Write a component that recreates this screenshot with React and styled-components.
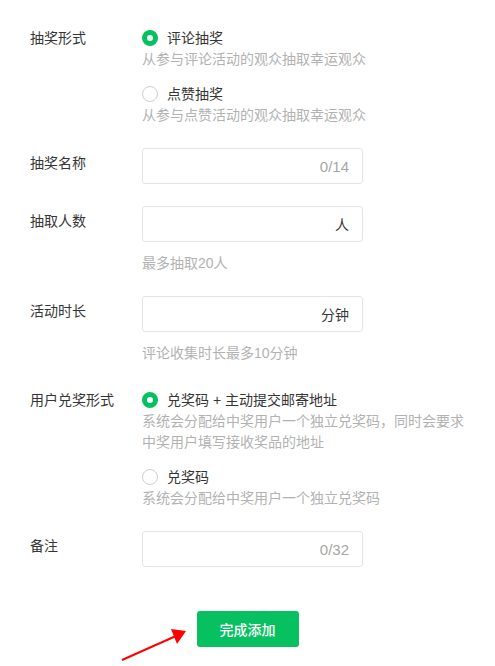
import React from 'react';
import styled, { createGlobalStyle } from 'styled-components';

const GlobalStyle = createGlobalStyle`
  html, body {
    margin: 0;
    padding: 0;
    background: #ffffff;
  }
  body {
    font-family: "Liberation Sans", "Noto Sans CJK SC", sans-serif;
    font-size: 14px;
    color: #353535;
  }
`;

const Page = styled.div`
  position: relative;
  width: 495px;
  min-height: 666px;
  box-sizing: border-box;
  padding: 27px 0 0 30px;
`;

const Form = styled.div`
  display: flex;
  flex-direction: column;
  gap: 22px;
`;

const Row = styled.div`
  display: grid;
  grid-template-columns: 112px 328px;
  align-items: start;
  margin-top: ${({ $push }) => ($push ? `${$push}px` : '0')};
`;

const Label = styled.div`
  line-height: 22px;
  margin-top: ${({ $input }) => ($input ? '4px' : '0')};
  color: #353535;
  white-space: nowrap;
`;

const Field = styled.div`
  display: flex;
  flex-direction: column;
`;

const Options = styled.div`
  display: flex;
  flex-direction: column;
  gap: 13px;
`;

const Option = styled.div`
  display: flex;
  flex-direction: column;
`;

const OptionLine = styled.label`
  display: flex;
  align-items: center;
  gap: 9px;
  height: 22px;
  line-height: 22px;
  color: #353535;
  cursor: pointer;
  white-space: pre;
`;

const RadioDot = styled.span`
  width: 16px;
  height: 16px;
  box-sizing: border-box;
  border-radius: 50%;
  background: #ffffff;
  border: ${({ $checked }) => ($checked ? '5px solid #07c160' : '1px solid #cfcfcf')};
  flex-shrink: 0;
`;

const Desc = styled.div`
  line-height: 21px;
  color: #b2b2b2;
`;

const InputBox = styled.div`
  display: flex;
  align-items: center;
  width: 221px;
  height: 36px;
  box-sizing: border-box;
  border: 1px solid #e5e5e5;
  border-radius: 3px;
  padding: 0 13px 0 12px;
`;

const TextInput = styled.input`
  flex: 1;
  min-width: 0;
  border: none;
  outline: none;
  background: transparent;
  font: inherit;
  color: #353535;
  padding: 0;
`;

const Suffix = styled.span`
  color: ${({ $muted }) => ($muted ? '#a6a6a6' : '#353535')};
  font-size: ${({ $muted }) => ($muted ? '15px' : '14px')};
  white-space: nowrap;
`;

const Hint = styled.div`
  margin-top: 11px;
  line-height: 21px;
  color: #b2b2b2;
`;

const Actions = styled.div`
  display: flex;
  justify-content: center;
  margin: 44px 0 0 -30px;
`;

const SubmitButton = styled.button`
  width: 102px;
  height: 36px;
  border: none;
  border-radius: 3px;
  background: #07c160;
  color: #ffffff;
  font: inherit;
  font-weight: 500;
  cursor: pointer;
`;

const Arrow = styled.svg`
  position: absolute;
  left: 118px;
  top: 624px;
`;

function RadioGroup({ options }) {
  return (
    <Options>
      {options.map((opt) => (
        <Option key={opt.title}>
          <OptionLine>
            <RadioDot $checked={opt.checked} />
            {opt.title}
          </OptionLine>
          {opt.desc.map((line) => (
            <Desc key={line}>{line}</Desc>
          ))}
        </Option>
      ))}
    </Options>
  );
}

function InputField({ suffix, muted, hint }) {
  return (
    <Field>
      <InputBox>
        <TextInput />
        <Suffix $muted={muted}>{suffix}</Suffix>
      </InputBox>
      {hint && <Hint>{hint}</Hint>}
    </Field>
  );
}

export default function App() {
  return (
    <Page>
      <GlobalStyle />
      <Form>
        <Row>
          <Label>抽奖形式</Label>
          <RadioGroup
            options={[
              { title: '评论抽奖', checked: true, desc: ['从参与评论活动的观众抽取幸运观众'] },
              { title: '点赞抽奖', checked: false, desc: ['从参与点赞活动的观众抽取幸运观众'] },
            ]}
          />
        </Row>
        <Row>
          <Label $input>抽奖名称</Label>
          <InputField suffix="0/14" muted />
        </Row>
        <Row>
          <Label $input>抽取人数</Label>
          <InputField suffix="人" hint="最多抽取20人" />
        </Row>
        <Row>
          <Label $input>活动时长</Label>
          <InputField suffix="分钟" hint="评论收集时长最多10分钟" />
        </Row>
        <Row $push={3}>
          <Label>用户兑奖形式</Label>
          <RadioGroup
            options={[
              {
                title: '兑奖码 + 主动提交邮寄地址',
                checked: true,
                desc: ['系统会分配给中奖用户一个独立兑奖码，同时会要求', '中奖用户填写接收奖品的地址'],
              },
              { title: '兑奖码', checked: false, desc: ['系统会分配给中奖用户一个独立兑奖码'] },
            ]}
          />
        </Row>
        <Row>
          <Label $input>备注</Label>
          <InputField suffix="0/32" muted />
        </Row>
      </Form>
      <Actions>
        <SubmitButton>完成添加</SubmitButton>
      </Actions>
      <Arrow width="72" height="40" viewBox="0 0 72 40">
        <line x1="4" y1="36" x2="58" y2="12" stroke="#ff0000" strokeWidth="2" />
        <polygon points="68,7 53,5 59,20" fill="#ff0000" />
      </Arrow>
    </Page>
  );
}
